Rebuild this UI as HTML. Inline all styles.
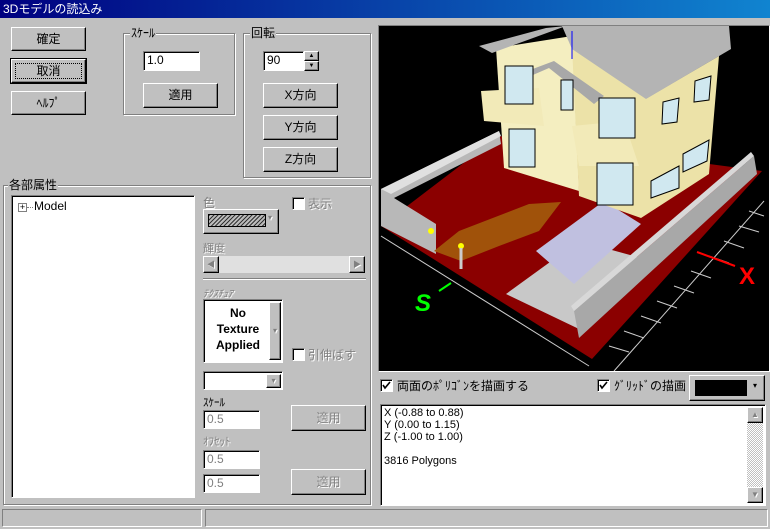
<!DOCTYPE html>
<html><head><meta charset="utf-8"><style>
*{box-sizing:border-box;margin:0;padding:0}
body{width:770px;height:529px;background:#c0c0c0;font-family:"Liberation Sans","Noto Sans CJK JP",sans-serif;font-size:12px;position:relative;overflow:hidden;color:#000}
.a{position:absolute}
.title{left:0;top:0;width:770px;height:18px;background:linear-gradient(90deg,#000080,#1084d0);color:#fff;font-size:12px;line-height:18px;padding-left:3px}
.btn{position:absolute;background:#c0c0c0;border:1px solid;border-color:#fff #000 #000 #fff;box-shadow:inset -1px -1px #808080;text-align:center;font-size:12px}
.btn.dis{color:#808080;text-shadow:1px 1px #fff}
.sunk{position:absolute;background:#fff;border:1px solid;border-color:#808080 #fff #fff #808080;box-shadow:inset 1px 1px #000}
.grp{position:absolute;border:1px solid #808080;box-shadow:1px 1px #fff,inset 1px 1px #fff}
.grp span{position:absolute;top:-8px;left:6px;background:#c0c0c0;padding:0 1px;line-height:14px}
.gray{color:#808080;text-shadow:1px 1px #fff}
.cb{position:absolute;width:13px;height:13px;background:#fff;border:1px solid;border-color:#808080 #fff #fff #808080;box-shadow:inset 1px 1px #000}
.cb svg{position:absolute;left:1px;top:1px}
.inp{font-size:12px;line-height:17px;padding-left:3px}
</style></head><body>
<div class="a title">3Dモデルの読込み</div>

<div class="btn" style="left:11px;top:27px;width:75px;height:24px;line-height:22px">確定</div>
<div class="btn" style="left:11px;top:59px;width:75px;height:24px;line-height:22px;outline:1px solid #000"><div style="margin:3px;border:1px dotted #000;line-height:14px">取消</div></div>
<div class="btn" style="left:11px;top:91px;width:75px;height:24px;line-height:22px">ﾍﾙﾌﾟ</div>

<div class="grp" style="left:123px;top:33px;width:112px;height:82px"><span>ｽｹｰﾙ</span></div>
<div class="sunk inp" style="left:143px;top:51px;width:57px;height:20px">1.0</div>
<div class="btn" style="left:143px;top:83px;width:75px;height:25px;line-height:23px">適用</div>

<div class="grp" style="left:243px;top:33px;width:128px;height:145px"><span>回転</span></div>
<div class="sunk inp" style="left:263px;top:51px;width:41px;height:20px">90</div>
<div class="btn" style="left:304px;top:51px;width:15px;height:10px;font-size:6px;line-height:8px">▲</div>
<div class="btn" style="left:304px;top:61px;width:15px;height:10px;font-size:6px;line-height:8px">▼</div>
<div class="btn" style="left:263px;top:83px;width:75px;height:25px;line-height:23px">X方向</div>
<div class="btn" style="left:263px;top:115px;width:75px;height:25px;line-height:23px">Y方向</div>
<div class="btn" style="left:263px;top:147px;width:75px;height:25px;line-height:23px">Z方向</div>

<div class="grp" style="left:3px;top:185px;width:368px;height:320px"><span style="left:4px">各部属性</span></div>
<div class="sunk" style="left:11px;top:195px;width:184px;height:303px">
 <div class="a" style="left:6px;top:7px;width:9px;height:9px;border:1px solid #808080;font-size:9px;line-height:7px;text-align:center">+</div>
 <div class="a" style="left:15px;top:11px;width:6px;border-top:1px dotted #808080"></div>
 <div class="a" style="left:22px;top:3px">Model</div>
</div>

<div class="a gray" style="left:203px;top:194px">色</div>
<div class="cb" style="left:292px;top:197px"></div>
<div class="a gray" style="left:308px;top:195px">表示</div>
<div class="btn" style="left:203px;top:209px;width:76px;height:25px">
 <div class="a" style="left:4px;top:4px;width:58px;height:13px;border:1px solid #000;background:repeating-linear-gradient(135deg,#333 0 1px,#bbb 1px 3px)"></div>
 <div class="a gray" style="left:64px;top:3px;font-size:8px">▾</div></div>
<div class="a gray" style="left:203px;top:240px;font-size:11px">輝度</div>
<div class="a" style="left:203px;top:256px;width:162px;height:17px;background:#e0e0e0"></div>
<div class="btn gray" style="left:203px;top:256px;width:16px;height:17px;font-size:8px;line-height:15px">◀</div>
<div class="btn gray" style="left:349px;top:256px;width:16px;height:17px;font-size:8px;line-height:15px">▶</div>
<div class="a" style="left:203px;top:278px;width:163px;height:2px;border-top:1px solid #808080;border-bottom:1px solid #fff"></div>
<div class="a gray" style="left:203px;top:285px;font-size:10px;font-style:italic">ﾃｸｽﾁｭｱ</div>
<div class="sunk" style="left:203px;top:299px;width:80px;height:64px">
 <div class="a" style="left:2px;top:5px;width:64px;text-align:center;font-weight:bold;font-size:12px;line-height:16px">No<br>Texture<br>Applied</div>
 <div class="btn gray" style="left:65px;top:2px;width:12px;height:58px;font-size:8px;line-height:56px">▾</div></div>
<div class="cb" style="left:292px;top:348px"></div>
<div class="a gray" style="left:308px;top:346px">引伸ばす</div>
<div class="sunk" style="left:203px;top:371px;width:80px;height:19px"><div class="btn gray" style="left:62px;top:2px;width:15px;height:14px;font-size:8px;line-height:12px">▾</div></div>
<div class="a" style="left:203px;top:394px;font-size:11px">ｽｹｰﾙ</div>
<div class="sunk inp gray" style="left:203px;top:410px;width:57px;height:19px;text-shadow:none">0.5</div>
<div class="btn dis" style="left:291px;top:405px;width:75px;height:26px;line-height:24px">適用</div>
<div class="a gray" style="left:203px;top:433px;font-size:11px">ｵﾌｾｯﾄ</div>
<div class="sunk inp gray" style="left:203px;top:450px;width:57px;height:19px;text-shadow:none">0.5</div>
<div class="sunk inp gray" style="left:203px;top:474px;width:57px;height:19px;text-shadow:none">0.5</div>
<div class="btn dis" style="left:291px;top:469px;width:75px;height:26px;line-height:24px">適用</div>

<div class="a" style="left:378px;top:25px;width:392px;height:347px;border:1px solid;border-color:#808080 #fff #fff #808080;background:#000">
<svg width="390" height="345" viewBox="0 0 390 345" style="position:absolute;left:0;top:0">
<polygon points="2,200 120,110 383,145 213,333" fill="#8b0000"/>
<g stroke="#ccc" stroke-width="1">
<line x1="230" y1="320" x2="250" y2="326"/><line x1="245" y1="305" x2="265" y2="312"/><line x1="262" y1="290" x2="282" y2="297"/><line x1="278" y1="275" x2="298" y2="282"/><line x1="295" y1="260" x2="315" y2="267"/><line x1="312" y1="245" x2="332" y2="252"/><line x1="330" y1="230" x2="350" y2="237"/><line x1="345" y1="215" x2="365" y2="222"/><line x1="360" y1="200" x2="380" y2="206"/><line x1="370" y1="185" x2="385" y2="190"/>
<line x1="2" y1="210" x2="210" y2="340"/><line x1="235" y1="345" x2="385" y2="175"/>
</g>
<polygon points="2,163 120,105 122,118 15,172 57,198 57,228 2,200" fill="#b8b8b8"/>
<polygon points="2,163 120,105 122,110 12,168" fill="#e0e0e0"/>
<polygon points="55,225 80,205 150,178 182,176 160,205 120,220 82,235" fill="#a0520a"/>
<polygon points="127,268 200,215 262,232 200,303" fill="#c8c8c8"/>
<polygon points="195,285 375,130 378,148 200,312" fill="#a8a8a8"/>
<polygon points="195,285 375,130 372,126 192,280" fill="#d8d8d8"/>
<polygon points="157,225 225,175 262,198 195,258" fill="#c0c0e0"/>
<polygon points="117,22 193,10 200,165 125,142" fill="#f4eec0"/>
<polygon points="193,20 268,72 340,30 330,148 262,192 200,170" fill="#ece2a8"/>
<polygon points="102,65 160,62 165,100 105,95" fill="#f2eab8"/>
<polygon points="193,100 245,95 260,140 200,140" fill="#f2eab8"/>
<polygon points="183,0 350,0 352,23 267,73 193,23" fill="#b4b4b4"/>
<polygon points="100,20 167,2 187,0 113,27" fill="#b4b4b4"/>
<polygon points="135,50 175,35 225,70 215,78 170,42 140,55" fill="#a8a8a8"/>
<g fill="#d0e8f0" stroke="#000">
<rect x="126" y="40" width="28" height="38"/><rect x="182" y="54" width="12" height="30"/><rect x="220" y="72" width="36" height="40"/>
<rect x="130" y="103" width="26" height="38"/><rect x="218" y="137" width="36" height="42"/>
<polygon points="284,76 300,72 298,96 283,98"/><polygon points="316,55 332,50 330,74 315,76"/>
<polygon points="272,155 300,140 300,162 272,172"/><polygon points="304,128 330,114 328,135 304,146"/>
</g>
<line x1="193" y1="5" x2="193" y2="33" stroke="#00f"/>
<circle cx="52" cy="205" r="3" fill="#ff0"/><circle cx="82" cy="220" r="3" fill="#ff0"/>
<line x1="82" y1="222" x2="82" y2="243" stroke="#ccc" stroke-width="3"/>
<line x1="318" y1="226" x2="356" y2="240" stroke="#f00" stroke-width="2"/>
<text x="360" y="258" fill="#f00" font-size="24" font-weight="bold" font-family="Liberation Sans">X</text>
<line x1="60" y1="265" x2="72" y2="257" stroke="#0f0" stroke-width="2"/>
<text x="36" y="285" fill="#0f0" font-size="24" font-weight="bold" font-family="Liberation Sans" font-style="italic">S</text>
</svg></div>

<div class="cb" style="left:380px;top:379px"><svg width="9" height="9"><path d="M1 4 L3 7 L8 1" stroke="#000" stroke-width="1.6" fill="none"/></svg></div>
<div class="a" style="left:397px;top:377px">両面のﾎﾟﾘｺﾞﾝを描画する</div>
<div class="cb" style="left:597px;top:379px"><svg width="9" height="9"><path d="M1 4 L3 7 L8 1" stroke="#000" stroke-width="1.6" fill="none"/></svg></div>
<div class="a" style="left:614px;top:377px">ｸﾞﾘｯﾄﾞの描画</div>
<div class="btn" style="left:689px;top:375px;width:76px;height:26px"><div class="a" style="left:5px;top:4px;width:52px;height:16px;background:#000"></div><div class="a" style="left:63px;top:5px;font-size:8px">▾</div></div>

<div class="sunk" style="left:380px;top:404px;width:386px;height:102px;font-size:11px;line-height:12px;padding:2px 3px">X (-0.88 to 0.88)<br>Y (0.00 to 1.15)<br>Z (-1.00 to 1.00)<br><br>3816 Polygons
 <div class="a" style="right:2px;top:2px;width:16px;height:96px;background:repeating-conic-gradient(#c0c0c0 0 25%,#fff 0 50%) 0 0/2px 2px"></div>
 <div class="btn gray" style="right:2px;top:2px;width:16px;height:16px;font-size:8px;line-height:14px">▲</div>
 <div class="btn gray" style="right:2px;top:82px;width:16px;height:16px;font-size:8px;line-height:14px">▼</div>
</div>

<div class="a" style="left:2px;top:509px;width:200px;height:18px;border:1px solid;border-color:#808080 #fff #fff #808080"></div>
<div class="a" style="left:205px;top:509px;width:563px;height:18px;border:1px solid;border-color:#808080 #fff #fff #808080"></div>
</body></html>
